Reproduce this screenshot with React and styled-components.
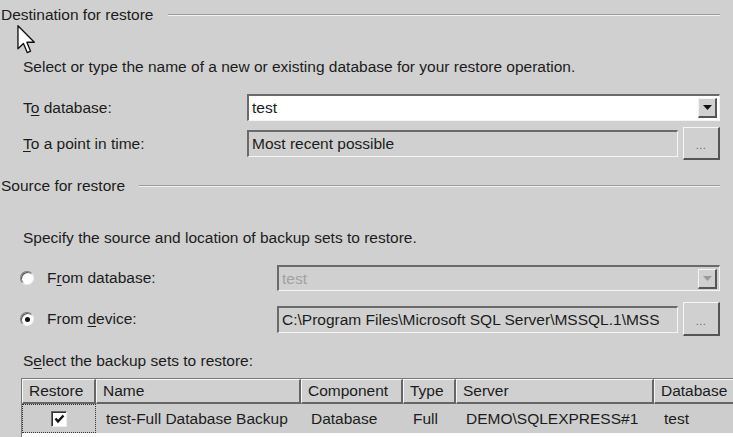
import React from 'react'
import styled, {createGlobalStyle} from 'styled-components'

const GlobalStyle = createGlobalStyle`
    body {
        margin: 0;
        background: #d0d0d0;
    }
`

const columns = [
    {title: 'Restore', width: 74},
    {title: 'Name', width: 205},
    {title: 'Component', width: 102},
    {title: 'Type', width: 53},
    {title: 'Server', width: 198},
    {title: 'Database', width: 110},
]

export default function App() {
    return (
        <Page>
            <GlobalStyle/>
            <GroupTitle>
                <span>Destination for restore</span>
                <Rule/>
            </GroupTitle>
            <Description $top={34}>
                Select or type the name of a new or existing database for your restore operation.
            </Description>

            <Field $top={18} $height={27} $label={224}>
                <Label>T<u>o</u> database:</Label>
                <Combo value="test"/>
            </Field>
            <Field $top={6} $height={33} $label={224}>
                <Label><u>T</u>o a point in time:</Label>
                <Browse value="Most recent possible"/>
            </Field>

            <GroupTitle $top={17}>
                <span>Source for restore</span>
                <Rule/>
            </GroupTitle>
            <Description $top={34}>
                Specify the source and location of backup sets to restore.
            </Description>

            <Field $top={18} $height={26} $label={254}>
                <RadioLabel>
                    <Radio/>
                    <span>F<u>r</u>om database:</span>
                </RadioLabel>
                <Combo value="test" disabled/>
            </Field>
            <Field $top={11} $height={34} $label={254}>
                <RadioLabel>
                    <Radio $checked/>
                    <span>From <u>d</u>evice:</span>
                </RadioLabel>
                <Browse value="C:\Program Files\Microsoft SQL Server\MSSQL.1\MSS"/>
            </Field>

            <Description $top={16}>
                S<u>e</u>lect the backup sets to restore:
            </Description>

            <Grid>
                <HeaderRow>
                    {columns.map(c => (
                        <HeaderCell key={c.title} $width={c.width}>{c.title}</HeaderCell>
                    ))}
                </HeaderRow>
                <DataRow>
                    <Cell $width={74} $center $focus>
                        <CheckBox>
                            <svg width="11" height="10" viewBox="0 0 11 10">
                                <path d="M1.5 4.5 L4 7.5 L9.5 1.5" fill="none" stroke="#111" strokeWidth="2.4"/>
                            </svg>
                        </CheckBox>
                    </Cell>
                    <Cell $width={205}>test-Full Database Backup</Cell>
                    <Cell $width={102}>Database</Cell>
                    <Cell $width={53}>Full</Cell>
                    <Cell $width={198}>DEMO\SQLEXPRESS#1</Cell>
                    <Cell $width={110}>test</Cell>
                </DataRow>
            </Grid>

            <Pointer width="19" height="29" viewBox="0 0 12.5 19.5">
                <path d="M0.5 0.5 L0.5 16 L4.2 12.4 L6.8 18.6 L9 17.6 L6.5 11.6 L11.5 11.6 Z"
                      fill="#fff" stroke="#111" strokeWidth="0.9" strokeLinejoin="round"/>
            </Pointer>
        </Page>
    )
}

const Combo = ({value, disabled}) => (
    <ComboBox $disabled={disabled}>
        <FieldText $disabled={disabled}>{value}</FieldText>
        <DropButton>
            <svg width="9" height="5" viewBox="0 0 9 5">
                <path d="M0 0 H9 L4.5 5 Z" fill={disabled ? '#9a9a9a' : '#111'}/>
            </svg>
        </DropButton>
    </ComboBox>
)

const Browse = ({value}) => (
    <BrowseRow>
        <ReadOnlyBox>
            <FieldText>{value}</FieldText>
        </ReadOnlyBox>
        <DotsButton>...</DotsButton>
    </BrowseRow>
)

const Page = styled.div`
    position: relative;
    width: 733px;
    height: 437px;
    overflow: hidden;
    padding-top: 6px;
    box-sizing: border-box;
    font-family: "Liberation Sans", Arial, sans-serif;
    font-size: 15.5px;
    color: #1c1c1c;
    background: #d0d0d0;

    u {
        text-decoration-thickness: 1px;
        text-underline-offset: 2px;
    }
`

const GroupTitle = styled.div`
    display: flex;
    align-items: center;
    gap: 14px;
    height: 18px;
    margin-top: ${p => p.$top || 0}px;
    margin-right: 13px;
    padding-left: 1px;
    white-space: nowrap;
`

const Rule = styled.div`
    flex: 1;
    height: 0;
    border-top: 1px solid #9a9a9a;
    border-bottom: 1px solid #f2f2f2;
`

const Description = styled.div`
    height: 18px;
    line-height: 18px;
    margin-top: ${p => p.$top || 0}px;
    padding-left: 23px;
    white-space: nowrap;
`

const Field = styled.div`
    display: grid;
    grid-template-columns: ${p => p.$label}px 1fr;
    align-items: center;
    height: ${p => p.$height}px;
    margin-top: ${p => p.$top || 0}px;
    padding-left: 23px;
    padding-right: 13px;
`

const Label = styled.div`
    white-space: nowrap;
`

const RadioLabel = styled.div`
    display: flex;
    align-items: center;
    gap: 13px;
    margin-left: -3px;
    white-space: nowrap;
`

const Radio = styled.span`
    position: relative;
    width: 12px;
    height: 12px;
    border-radius: 50%;
    background: #fff;
    border: 1px solid #7a7a7a;
    border-right-color: #eee;
    border-bottom-color: #eee;
    box-shadow: inset 1px 1px 0 #555;

    &::after {
        content: '';
        display: ${p => p.$checked ? 'block' : 'none'};
        position: absolute;
        left: 3.5px;
        top: 3.5px;
        width: 5px;
        height: 5px;
        border-radius: 50%;
        background: #111;
    }
`

const ComboBox = styled.div`
    display: flex;
    align-items: center;
    height: 100%;
    box-sizing: border-box;
    background: ${p => p.$disabled ? '#d0d0d0' : '#fff'};
    border-top: 2px solid #6a6a6a;
    border-left: 2px solid #6a6a6a;
    border-bottom: 1px solid #f4f4f4;
    border-right: 1px solid #f4f4f4;
    padding-right: 2px;
`

const FieldText = styled.div`
    flex: 1;
    padding-left: 3px;
    white-space: nowrap;
    overflow: hidden;
    color: ${p => p.$disabled ? '#a2a2a2' : '#1c1c1c'};
`

const DropButton = styled.div`
    display: flex;
    align-items: center;
    justify-content: center;
    width: 19px;
    height: 20px;
    box-sizing: border-box;
    background: #d0d0d0;
    border-top: 1px solid #f4f4f4;
    border-left: 1px solid #f4f4f4;
    border-right: 2px solid #555;
    border-bottom: 2px solid #555;
`

const BrowseRow = styled.div`
    display: flex;
    align-items: center;
    gap: 5px;
    height: 100%;
`

const ReadOnlyBox = styled.div`
    flex: 1;
    display: flex;
    align-items: center;
    height: 27px;
    box-sizing: border-box;
    background: #d0d0d0;
    border-top: 2px solid #6a6a6a;
    border-left: 2px solid #6a6a6a;
    border-bottom: 1px solid #f4f4f4;
    border-right: 1px solid #f4f4f4;
`

const DotsButton = styled.div`
    display: flex;
    align-items: flex-end;
    justify-content: center;
    width: 37px;
    height: 100%;
    box-sizing: border-box;
    padding-bottom: 7px;
    background: #d0d0d0;
    border-top: 1px solid #f6f6f6;
    border-left: 1px solid #f6f6f6;
    border-right: 2px solid #555;
    border-bottom: 2px solid #555;
    font-size: 11px;
    line-height: 1;
    color: #666;
    letter-spacing: 0.5px;
`

const Grid = styled.div`
    width: 760px;
    height: 80px;
    margin-top: 8px;
    margin-left: 21px;
    background: #fff;
    border-top: 1px solid #7a7a7a;
    border-left: 1px solid #7a7a7a;
`

const HeaderRow = styled.div`
    display: flex;
    height: 25px;
`

const HeaderCell = styled.div`
    display: flex;
    align-items: center;
    width: ${p => p.$width}px;
    flex: none;
    box-sizing: border-box;
    padding-left: 6px;
    background: #d0d0d0;
    border-top: 1px solid #f6f6f6;
    border-left: 1px solid #f6f6f6;
    border-right: 2px solid #666;
    border-bottom: 2px solid #666;
    white-space: nowrap;
    overflow: hidden;
`

const DataRow = styled.div`
    display: flex;
    height: 29px;
    background: #cdcdcd;
`

const Cell = styled.div`
    display: flex;
    align-items: center;
    justify-content: ${p => p.$center ? 'center' : 'flex-start'};
    width: ${p => p.$width}px;
    flex: none;
    box-sizing: border-box;
    padding-left: ${p => p.$center ? 0 : 10}px;
    white-space: nowrap;
    overflow: hidden;
    outline: ${p => p.$focus ? '1px dotted #333' : 'none'};
    outline-offset: -1px;
`

const CheckBox = styled.div`
    display: flex;
    align-items: center;
    justify-content: center;
    width: 14px;
    height: 14px;
    background: #fff;
    border-top: 1px solid #666;
    border-left: 1px solid #666;
    border-right: 1px solid #eee;
    border-bottom: 1px solid #eee;
    box-shadow: inset 1px 1px 0 #333;
`

const Pointer = styled.svg`
    position: absolute;
    left: 17px;
    top: 25px;
`
